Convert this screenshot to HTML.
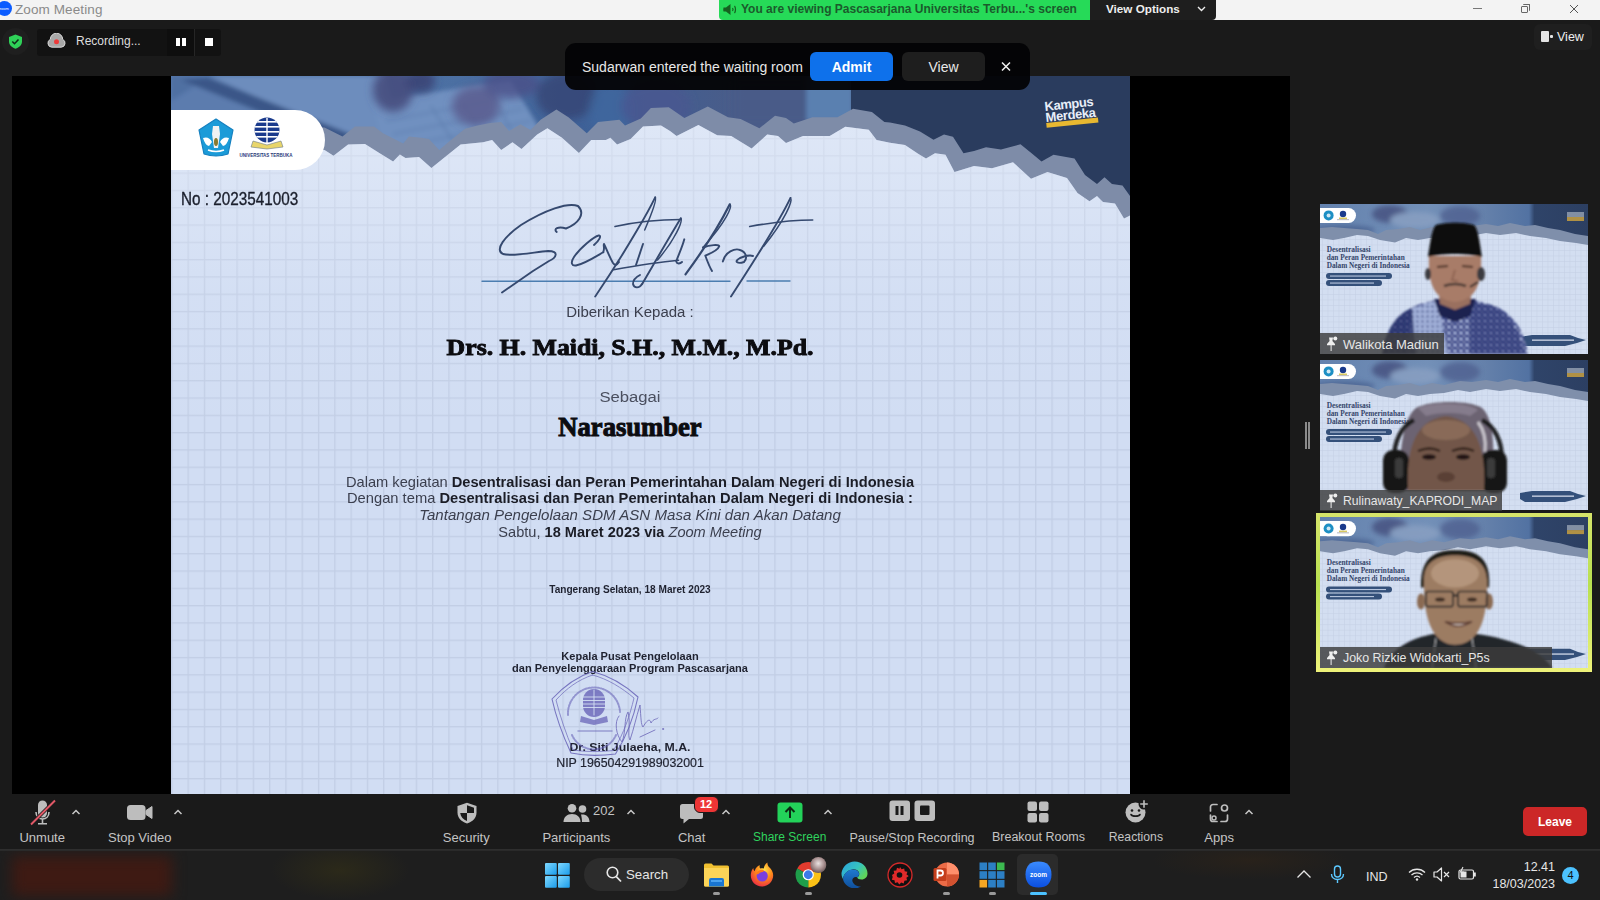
<!DOCTYPE html>
<html><head><meta charset="utf-8">
<style>
*{margin:0;padding:0;box-sizing:border-box}
html,body{width:1600px;height:900px;overflow:hidden;background:#1a1a1a;font-family:"Liberation Sans",sans-serif}
.a{position:absolute}
#title{left:0;top:0;width:1600px;height:20px;background:#f3f3f3}
#dark{left:0;top:20px;width:1600px;height:830px;background:#1a1a1a}
#video{left:12px;top:76px;width:1278px;height:718px;background:#000}
#cert{left:171px;top:76px;width:959px;height:718px;background:#d3dff1;overflow:hidden}
#toolbar{left:0;top:794px;width:1600px;height:56px;background:#1a1a1a}
#taskbar{left:0;top:850px;width:1600px;height:50px;background:#202020}
.lbl{color:#d0d0d0;font-size:13px;white-space:nowrap}
</style></head><body>
<div class="a" id="title"></div>
<div class="a" id="dark"></div>
<div class="a" id="video"></div>
<div class="a" id="toolbar"></div>

<!-- TITLE BAR -->
<div class="a" style="left:-3px;top:1px;width:15px;height:15px;border-radius:50%;background:#0b5cff"></div>
<div class="a" style="left:-1px;top:6px;font-size:4px;color:#fff">zoom</div>
<div class="a" style="left:15px;top:2px;font-size:13.5px;color:#8a8a8a;letter-spacing:0.1px">Zoom Meeting</div>
<div class="a" style="left:719px;top:0;width:371px;height:20px;background:#26da58;border-bottom-left-radius:4px"></div>
<svg class="a" style="left:722px;top:3px" width="16" height="13" viewBox="0 0 16 13"><path d="M1.5 4.5Q1 6.5 1.5 8.5h2.5l4.5 3.5v-11L4 4.5z" fill="#15601f"/><path d="M10.5 5c.6 .8 .6 2.2 0 3M12.5 3c1.3 1.6 1.3 5.4 0 7" stroke="#15601f" stroke-width="1.2" fill="none"/></svg>
<div class="a" style="left:741px;top:2px;font-size:12px;font-weight:bold;color:#1b5a2c;white-space:nowrap">You are viewing Pascasarjana Universitas Terbu...'s screen</div>
<div class="a" style="left:1090px;top:0;width:126px;height:20px;background:#1e1e1e;border-bottom-right-radius:4px"></div>
<div class="a" style="left:1106px;top:2px;font-size:11.7px;font-weight:bold;color:#eee;white-space:nowrap">View Options</div>
<svg class="a" style="left:1197px;top:6px" width="9" height="6" viewBox="0 0 9 6"><path d="M1 1l3.5 3.5L8 1" stroke="#eee" stroke-width="1.4" fill="none"/></svg>
<div class="a" style="left:1473px;top:8px;width:9px;height:1px;background:#777"></div>
<div class="a" style="left:1521px;top:6px;width:7px;height:7px;border:1px solid #666;border-radius:1px"></div>
<div class="a" style="left:1523px;top:4px;width:7px;height:7px;border-top:1px solid #666;border-right:1px solid #666;border-radius:1px"></div>
<svg class="a" style="left:1569px;top:4px" width="10" height="10" viewBox="0 0 10 10"><path d="M1 1l8 8M9 1L1 9" stroke="#555" stroke-width="1"/></svg>

<!-- TOP DARK BAR -->
<div class="a" style="left:2px;top:28px;width:27px;height:27px;border-radius:50%;background:#1f1f1f"></div>
<svg class="a" style="left:8px;top:34px" width="15" height="15" viewBox="0 0 15 15"><path d="M7.5 0.5L14 3v4.5c0 3.5-2.8 6-6.5 7.3C3.8 13.5 1 11 1 7.5V3z" fill="#2fd158"/><path d="M4.3 7.5l2.2 2.2 4-4.2" stroke="#0f2a18" stroke-width="1.6" fill="none"/></svg>
<div class="a" style="left:37px;top:29px;width:184px;height:27px;background:#121212;border-radius:3px"></div>
<div class="a" style="left:167px;top:29px;width:27px;height:27px;background:#0e0e0e"></div>
<div class="a" style="left:194px;top:29px;width:1px;height:27px;background:#262626"></div>
<svg class="a" style="left:47px;top:33px" width="19" height="15" viewBox="0 0 19 15"><path d="M4.8 14.2A4.1 4.1 0 0 1 3.3 6.4 6.2 6.2 0 0 1 15.7 6.4 4.1 4.1 0 0 1 14.2 14.2z" fill="#a8a8a8" stroke="#d8d8d8" stroke-width="1"/><circle cx="9.5" cy="8.8" r="2.5" fill="#ee3b3b"/></svg>
<div class="a" style="left:76px;top:34px;font-size:12px;color:#ddd;white-space:nowrap">Recording...</div>
<div class="a" style="left:176px;top:38px;width:3.5px;height:8px;background:#fff"></div>
<div class="a" style="left:182px;top:38px;width:3.5px;height:8px;background:#fff"></div>
<div class="a" style="left:205px;top:38px;width:8px;height:8px;background:#fff"></div>

<div class="a" style="left:1534px;top:24px;width:58px;height:26px;border-radius:6px;background:#1f1f1f"></div>
<div class="a" style="left:1541px;top:31px;width:8px;height:11px;background:#e6e6e6;border-radius:1px"></div>
<div class="a" style="left:1550px;top:35px;width:3px;height:3px;background:#e6e6e6;border-radius:1px"></div>
<div class="a" style="left:1557px;top:30px;font-size:12.5px;color:#eee">View</div>


<div class="a" id="cert">
<svg class="a" style="left:0;top:0" width="959" height="718" viewBox="0 0 959 718">
<defs>
<linearGradient id="ph" x1="0" y1="0" x2="1" y2="0">
<stop offset="0" stop-color="#5579ad"/><stop offset="0.3" stop-color="#4b6fa2"/><stop offset="0.45" stop-color="#3d5f96"/><stop offset="0.6" stop-color="#4a5c88"/><stop offset="0.7" stop-color="#4a5c88"/><stop offset="0.71" stop-color="#2a3c5e"/><stop offset="1" stop-color="#2a3c5e"/>
</linearGradient>
<pattern id="grid" x="16.5" y="10" width="16.3" height="17.3" patternUnits="userSpaceOnUse">
<rect width="16.3" height="17.3" fill="#d1ddf3"/>
<rect x="0" y="-0.3" width="16.3" height="1.6" fill="#c2cee5"/>
<rect x="-0.3" y="0" width="1.6" height="17.3" fill="#c2cee5"/>
</pattern>
<linearGradient id="glow" x1="0" y1="0" x2="0" y2="718" gradientUnits="userSpaceOnUse"><stop offset="0.07" stop-color="#eef3fb" stop-opacity="0.45"/><stop offset="0.3" stop-color="#eef3fb" stop-opacity="0.1"/><stop offset="0.5" stop-color="#eef3fb" stop-opacity="0"/></linearGradient>
<filter id="bl4"><feGaussianBlur stdDeviation="4"/></filter>
<filter id="bl2"><feGaussianBlur stdDeviation="2"/></filter>
</defs>
<rect width="959" height="220" fill="url(#ph)"/>
<g filter="url(#bl2)">
<path d="M0 0 H40 L0 25z" fill="#4f70a2"/>
<path d="M40 0 H215 L230 60 L200 75 L165 70z" fill="#6d8dbd"/>
<path d="M0 25 L40 0 L175 62 L160 72 L0 60z" fill="#5b7cae"/>
<path d="M10 4 L38 2 L180 58 L168 68z" fill="#3a5688"/>
<path d="M200 25 L340 5 L370 55 L260 85 L215 80z" fill="#7090c0"/>
<g stroke="#5070a0" stroke-width="1.2" opacity="0.7"><path d="M215 45 L345 20M222 58 L352 33M232 70 L360 45M260 30 L290 78M290 25 L320 72M320 18 L345 62"/></g>
</g>
<g filter="url(#bl4)">
<ellipse cx="222" cy="14" rx="20" ry="22" fill="#474c7e" opacity="0.9"/>
<ellipse cx="250" cy="5" rx="14" ry="12" fill="#3a3f70" opacity="0.8"/>
<ellipse cx="305" cy="30" rx="24" ry="20" fill="#5a5c8e" opacity="0.85"/>
<ellipse cx="340" cy="8" rx="28" ry="14" fill="#4a5088" opacity="0.8"/>
<ellipse cx="395" cy="20" rx="30" ry="24" fill="#35406e" opacity="0.7"/>
<ellipse cx="440" cy="35" rx="22" ry="28" fill="#3f69a0" opacity="0.7"/>
<ellipse cx="485" cy="30" rx="35" ry="25" fill="#4a5590" opacity="0.75"/>
<rect x="560" y="0" width="120" height="50" fill="#4a5c88" opacity="0.6"/>
</g>
<rect x="635" y="0" width="47" height="45" fill="#5a80b0" filter="url(#bl2)"/>
<path d="M680 0 H959 V150 L680 60z" fill="#2a3c5e"/>
<polygon points="0.0,42.0 153.5,51.6 171.5,60.6 183.9,50.5 203.0,50.5 212.0,57.2 232.2,67.4 237.9,60.6 250.2,61.8 258.0,62.9 268.2,74.1 277.2,66.2 294.0,52.8 306.5,49.4 319.0,47.1 330.2,46.0 338.1,55.0 349.4,48.2 359.5,53.9 369.6,43.8 385.4,33.6 397.8,41.5 415.8,57.2 427.0,46.0 448.4,43.8 454.0,49.4 469.8,42.6 479.9,31.9 497.8,31.2 513.4,42.0 536.8,30.4 557.0,41.3 569.6,43.0 588.4,52.3 604.0,39.8 615.0,42.0 622.8,47.6 641.5,41.3 666.5,41.3 682.0,32.8 700.9,35.9 713.4,46.0 719.0,46.5 734.0,49.5 749.0,55.5 762.5,63.8 773.0,58.5 782.0,60.8 792.5,77.2 803.0,75.0 815.0,71.2 830.0,73.5 849.5,68.2 861.5,78.0 870.5,85.5 882.5,78.8 903.5,82.5 914.0,99.0 926.0,108.0 933.5,101.2 941.0,108.0 951.5,109.5 959.0,120.0 959,718 0,718" fill="#7e8ca8"/>
<polygon points="0.0,64.0 153.5,74.1 162.5,79.8 177.1,68.5 194.0,67.9 207.5,76.4 222.1,85.4 228.9,78.6 234.5,82.0 248.0,80.9 260.4,92.1 272.8,82.0 289.6,68.5 312.1,66.2 321.1,64.0 330.2,74.1 341.5,66.2 350.5,73.0 366.2,58.4 376.4,52.2 391.0,61.8 407.9,76.9 420.2,64.0 434.9,64.0 439.4,61.8 446.1,68.5 459.6,62.9 472.0,50.5 490.0,49.4 499.0,55.0 505.6,60.0 527.4,49.0 546.2,59.3 560.2,60.0 580.6,72.6 596.2,58.5 607.0,60.0 615.0,67.0 632.0,60.0 658.7,60.0 674.3,50.7 697.8,53.8 705.6,64.0 719.0,66.8 734.0,69.0 747.5,78.0 755.0,82.5 764.0,77.2 774.5,78.8 783.5,96.0 803.0,90.0 821.0,92.2 842.0,86.2 860.0,102.8 876.5,96.0 896.0,102.0 906.5,117.0 918.5,125.2 926.0,120.0 932.0,126.0 944.0,127.5 953.0,142.5 959.0,139.5 959,718 0,718" fill="url(#grid)"/>
<polygon points="0.0,64.0 153.5,74.1 162.5,79.8 177.1,68.5 194.0,67.9 207.5,76.4 222.1,85.4 228.9,78.6 234.5,82.0 248.0,80.9 260.4,92.1 272.8,82.0 289.6,68.5 312.1,66.2 321.1,64.0 330.2,74.1 341.5,66.2 350.5,73.0 366.2,58.4 376.4,52.2 391.0,61.8 407.9,76.9 420.2,64.0 434.9,64.0 439.4,61.8 446.1,68.5 459.6,62.9 472.0,50.5 490.0,49.4 499.0,55.0 505.6,60.0 527.4,49.0 546.2,59.3 560.2,60.0 580.6,72.6 596.2,58.5 607.0,60.0 615.0,67.0 632.0,60.0 658.7,60.0 674.3,50.7 697.8,53.8 705.6,64.0 719.0,66.8 734.0,69.0 747.5,78.0 755.0,82.5 764.0,77.2 774.5,78.8 783.5,96.0 803.0,90.0 821.0,92.2 842.0,86.2 860.0,102.8 876.5,96.0 896.0,102.0 906.5,117.0 918.5,125.2 926.0,120.0 932.0,126.0 944.0,127.5 953.0,142.5 959.0,139.5 959,718 0,718" fill="url(#glow)"/>
</svg>
<div class="a" style="left:0;top:34px;width:154px;height:60px;background:#fff;border-radius:0 30px 30px 0"></div>
<svg class="a" style="left:26px;top:42px" width="38" height="40" viewBox="0 0 38 40">
<path d="M19 1 L36 12 L31 36 Q19 40 7 36 L2 12z" fill="#1b9bd8" stroke="#1580c0" stroke-width="1.2" stroke-linejoin="round"/>
<path d="M6 20 Q12 18 15 24 L12 28 Q8 27 6 20z M32 20 Q26 18 23 24 L26 28 Q30 27 32 20z" fill="#fff"/>
<path d="M16 8 L22 8 L23 16 L21 30 L17 30 L15 16z" fill="#f2f2f2"/>
<ellipse cx="19" cy="24" rx="2" ry="4" fill="#8a7a30"/>
<path d="M11 32 Q19 35 27 32" stroke="#fff" stroke-width="1.5" fill="none"/>
</svg>
<svg class="a" style="left:66px;top:40px" width="60" height="44" viewBox="0 0 60 44">
<defs><clipPath id="utc"><circle cx="30" cy="14" r="12.5"/></clipPath></defs>
<g clip-path="url(#utc)"><rect x="16" y="0" width="28" height="28" fill="#1a3a8c"/>
<rect x="16" y="5" width="28" height="1.6" fill="#fff"/><rect x="16" y="10" width="28" height="1.6" fill="#fff"/><rect x="16" y="15" width="28" height="1.6" fill="#fff"/><rect x="16" y="20" width="28" height="1.6" fill="#fff"/></g>
<rect x="29.3" y="2" width="1.4" height="27" fill="#fff"/>
<path d="M16 25 L30 29 L44 25 L46 31 L30 33 L14 31z" fill="#e8d56a" stroke="#6a7a8a" stroke-width="0.6"/>
<text x="2.5" y="41" font-size="4.8" font-family="Liberation Sans" font-weight="bold" fill="#2a3a7a" textLength="53" lengthAdjust="spacingAndGlyphs">UNIVERSITAS TERBUKA</text>
</svg>
<div class="a" style="left:873px;top:26px;transform:rotate(-6deg);transform-origin:0 0">
<div style="font-size:13px;line-height:10.5px;font-weight:bold;color:#e8eef8;letter-spacing:-0.4px">Kampus<br>Merdeka</div>
<div style="margin-top:0px;width:52px;height:5px;background:#e8b830"></div>
</div>
<div class="a" style="left:-41px;top:114.9px;width:1000px;text-align:center;font-size:17.6px;line-height:17.6px;color:#1b1f2c;font-weight:normal;white-space:nowrap;transform:scaleX(0.868);left:10px;width:auto;text-align:left;transform-origin:0 0;-webkit-text-stroke:0.35px #1b1f2c;">No : 2023541003</div>
<div class="a" style="left:-41px;top:229px;width:1000px;text-align:center;font-size:14px;line-height:14px;color:#3b3f4e;font-weight:normal;white-space:nowrap;transform:scaleX(1.07);">Diberikan Kepada :</div>
<div class="a" style="left:-41px;top:258.9px;width:1000px;text-align:center;font-size:24px;line-height:24px;font-family:'Liberation Serif',serif;color:#0c0c10;font-weight:bold;white-space:nowrap;transform:scaleX(1.075);-webkit-text-stroke:0.9px #0c0c10;">Drs. H. Maidi, S.H., M.M., M.Pd.</div>
<div class="a" style="left:-41px;top:313.5px;width:1000px;text-align:center;font-size:14px;line-height:14px;color:#4a4f5f;font-weight:normal;white-space:nowrap;transform:scaleX(1.19);">Sebagai</div>
<div class="a" style="left:-41px;top:338px;width:1000px;text-align:center;font-size:26.6px;line-height:26.6px;font-family:'Liberation Serif',serif;color:#0c0c10;font-weight:bold;white-space:nowrap;transform:scaleX(1.0);-webkit-text-stroke:1px #0c0c10;">Narasumber</div>
<div class="a" style="left:-41px;top:398.5px;width:1000px;text-align:center;font-size:14.5px;line-height:14.5px;color:#3b3f4e;font-weight:normal;white-space:nowrap;transform:scaleX(1.01);">Dalam kegiatan <b style="color:#1b1d26">Desentralisasi dan Peran Pemerintahan Dalam Negeri di Indonesia</b></div>
<div class="a" style="left:-41px;top:415.3px;width:1000px;text-align:center;font-size:14.5px;line-height:14.5px;color:#3b3f4e;font-weight:normal;white-space:nowrap;transform:scaleX(1.015);">Dengan tema <b style="color:#1b1d26">Desentralisasi dan Peran Pemerintahan Dalam Negeri di Indonesia :</b></div>
<div class="a" style="left:-41px;top:432.2px;width:1000px;text-align:center;font-size:14.5px;line-height:14.5px;color:#3b3f4e;font-weight:normal;white-space:nowrap;transform:scaleX(1.04);"><i>Tantangan Pengelolaan SDM ASN Masa Kini dan Akan Datang</i></div>
<div class="a" style="left:-41px;top:449.1px;width:1000px;text-align:center;font-size:14.5px;line-height:14.5px;color:#3b3f4e;font-weight:normal;white-space:nowrap;transform:scaleX(1.005);">Sabtu, <b style="color:#1b1d26">18 Maret 2023 via</b> <i>Zoom Meeting</i></div>
<div class="a" style="left:-41px;top:508.3px;width:1000px;text-align:center;font-size:10.5px;line-height:10.5px;color:#1f2230;font-weight:bold;white-space:nowrap;transform:scaleX(0.962);">Tangerang Selatan, 18 Maret 2023</div>
<div class="a" style="left:-41px;top:574.6px;width:1000px;text-align:center;font-size:10.5px;line-height:10.5px;color:#1f2230;font-weight:bold;white-space:nowrap;transform:scaleX(1.05);">Kepala Pusat Pengelolaan</div>
<div class="a" style="left:-41px;top:587.1px;width:1000px;text-align:center;font-size:10.5px;line-height:10.5px;color:#1f2230;font-weight:bold;white-space:nowrap;transform:scaleX(1.05);">dan Penyelenggaraan Program Pascasarjana</div>
<div class="a" style="left:-41px;top:666.2px;width:1000px;text-align:center;font-size:11.5px;line-height:11.5px;color:#1f2230;font-weight:bold;white-space:nowrap;transform:scaleX(1.07);">Dr. Siti Julaeha, M.A.</div>
<div class="a" style="left:-41px;top:680.7px;width:1000px;text-align:center;font-size:12px;line-height:12px;color:#1f2230;font-weight:normal;white-space:nowrap;transform:scaleX(1.03);-webkit-text-stroke:0.2px #1f2230;">NIP 196504291989032001</div>
<svg class="a" style="left:0;top:0;pointer-events:none" width="959" height="718" viewBox="0 0 959 718">
<g transform="translate(-171,-76)" fill="none" stroke-linecap="round" stroke-linejoin="round">
<g stroke="#4b7db0" stroke-width="1.4"><path d="M482,281.3 H730"/><path d="M747,281 H790"/></g>
<g stroke="#35496f" stroke-width="1.9">
<path d="M556.7,232 C553,229 558,226 566,228.5 C578,224 586,214 578,206 C568,202 545,210 521,225 C505,236 494,250 503,254 C512,257 535,252 548,251 C560,251 556,258 549,261 L533,271 L502,292.5"/>
<path d="M594,245 C599,241 602,235 598.7,235.5 C594,236.5 580,248 574,257 C570,263 572,266 576,265.5 C584,264 595,257 603.3,252.2"/>
<path d="M603.3,252.2 C605,248 603,245 604,244 C607,250 610,258 613,263 C615,266 617,265 619,262"/>
<path d="M655.2,197.3 C650,208 630,245 595.2,296.5"/>
<path d="M655.2,197.3 C657,199 652,213 644.7,230" stroke-width="1.5"/>
<path d="M615,226.5 C640,221 660,219.5 681,219.5" stroke-width="1.6"/>
<path d="M643,244 L636,265"/>
<path d="M680.8,218.3 C670,236 655,262 642.3,283.7"/>
<path d="M680.8,218.3 C683,221 675,240 657.5,260" stroke-width="1.5"/>
<path d="M642.3,283.7 C639,289 634,288 633,284 C633,280 636,277 640,275"/>
<path d="M613.5,269.7 C640,265 660,262 678.5,260.3" stroke-width="1.5"/>
<path d="M684.3,239.3 C682,248 678,256 676.2,261.5 C677,264 680,264 682,262"/>
<path d="M729.8,204.3 C722,220 705,248 685.5,274.3" stroke-width="2.2"/>
<path d="M729.8,204.3 C733,206 726,222 703,247.5" stroke-width="1.5"/>
<path d="M703,247.5 C710,245 719,244 719.3,246.3 C718,250 712,253 705.3,255.7 C707,260 709,266 712,271"/>
<path d="M722.8,261.5 C725,252 735,248 740,250 C746,252 748,258 744,262 C738,264 733,262 740,258 C745,256 750,255 753,256"/>
<path d="M790.5,197.9 C780,220 760,252 731,296.5"/>
<path d="M790.5,197.9 C793,201 785,220 763.7,246.3" stroke-width="1.5"/>
<path d="M749.7,226.5 C775,222 795,220 812.7,220" stroke-width="1.6"/>
</g>
<g stroke="#625cb4" stroke-width="1.1" opacity="0.8">
<path d="M592.5,671.5 C610,676 626,686 638,697 C634,716 627,736 615.5,754 C600,756 585,756 571,753 C563,736 556,717 552,699 C564,686 576,677 592.5,671.5z"/>
<path d="M592.5,675 C608,679 622,688 634,698 C630,715 624,733 613.5,750.5 C600,752 585,752 573,750 C566,734 560,716 556,700 C567,688 578,680 592.5,675z" stroke-width="0.8"/>
</g>
<g fill="none" stroke="#625cb4" stroke-width="2" opacity="0.55" stroke-dasharray="1.6 1.4">
<path d="M568,715 A26,26 0 0 1 620,712"/>
<path d="M572,735 A24,24 0 0 0 616,735"/>
</g>
<g fill="#625cb4" opacity="0.75">
<path d="M583,700 a11,11 0 0 1 22,0 v6 a11,11 0 0 1 -22,0z"/>
</g>
<g stroke="#d3dff3" stroke-width="0.9"><path d="M582,697h24M582,700.5h24M582,704h24M582,707.5h24M594,690v25"/></g>
<path d="M581,716 L594,720 L607,716 L608,722 L594,725 L580,722z" fill="#625cb4" opacity="0.7"/>
<path d="M578,731 H612" stroke="#625cb4" stroke-width="1.5" opacity="0.5"/>
<g stroke="#6c66b8" stroke-width="0.9" opacity="0.9">
<path d="M619,716 C614,722 616,735 622,742 C626,732 624,718 628,712 C631,722 627,736 630,740 C634,728 636,718 640,705 C641,718 641,725 643,727 C647,720 650,718 651,723 C654,718 656,720 658,718"/>
<path d="M640,737 L655,730"/><circle cx="663" cy="729" r="0.6"/>
</g>
</g></svg>

</div>

<svg width="0" height="0" style="position:absolute">
<defs>
<pattern id="tgrid" x="2" y="2" width="5.5" height="5.5" patternUnits="userSpaceOnUse"><rect width="5.5" height="5.5" fill="#d3def1"/><rect width="5.5" height="0.5" fill="#c4d0e5"/><rect width="0.5" height="5.5" fill="#c4d0e5"/></pattern>
<linearGradient id="tph" x1="0" y1="0" x2="1" y2="0"><stop offset="0" stop-color="#6482ae"/><stop offset="0.4" stop-color="#7390b8"/><stop offset="0.62" stop-color="#6480aa"/><stop offset="0.78" stop-color="#5272a2"/><stop offset="0.8" stop-color="#2f4469"/><stop offset="1" stop-color="#2c3f62"/></linearGradient>
<filter id="tb1"><feGaussianBlur stdDeviation="1.2"/></filter>
<filter id="tb2"><feGaussianBlur stdDeviation="2.5"/></filter>
<symbol id="slide" viewBox="0 0 268 150">
<rect width="268" height="45" fill="url(#tph)"/>
<g filter="url(#tb2)" opacity="0.8"><ellipse cx="70" cy="10" rx="18" ry="9" fill="#45507e"/><ellipse cx="95" cy="16" rx="25" ry="8" fill="#8aa0c2"/><ellipse cx="25" cy="26" rx="30" ry="5" fill="#4a6290"/><ellipse cx="140" cy="12" rx="20" ry="10" fill="#506090"/></g>
<polygon points="0,24 12,23 24,24 37,25 48,26 58,30 66,26 78,25 90,23 100,26 112,23 124,25 140,21 152,22 166,20 178,22 190,19 205,22 215,21 228,24 240,26 255,30 268,32 268,150 0,150" fill="#7f8fab"/>
<polygon points="0,34 13,36 24,34 37,31 48,32 60,36 75,38.5 86,34 98,36 110,34 124,33 138,30 150,32 166,29 180,31 196,29 210,32 226,34 240,37 256,39 268,41 268,150 0,150" fill="url(#tgrid)"/>
<rect x="0" y="4" width="36" height="15" rx="7.5" fill="#fff"/><rect x="0" y="4" width="10" height="15" fill="#fff"/>
<circle cx="8.6" cy="11.4" r="5" fill="#1d8fc4"/><circle cx="8.6" cy="11.4" r="2" fill="#cfe8f4"/><circle cx="23" cy="10" r="3.2" fill="#1a3a8c"/><rect x="19" y="13.5" width="8" height="1.6" fill="#d8c860"/><rect x="17" y="15.5" width="12" height="0.6" fill="#889"/>
<rect x="247" y="8" width="17" height="5" fill="#c9cfd9" opacity="0.55"/><rect x="247" y="13" width="17" height="4" fill="#c8a040" opacity="0.85"/>
<text x="6.7" y="47.8" font-family="Liberation Serif" font-weight="bold" font-size="8" fill="#34456a" textLength="44" lengthAdjust="spacingAndGlyphs">Desentralisasi</text>
<text x="6.7" y="55.8" font-family="Liberation Serif" font-weight="bold" font-size="8" fill="#34456a" textLength="78" lengthAdjust="spacingAndGlyphs">dan Peran Pemerintahan</text>
<text x="6.7" y="64" font-family="Liberation Serif" font-weight="bold" font-size="8" fill="#34456a" textLength="83" lengthAdjust="spacingAndGlyphs">Dalam Negeri di Indonesia</text>
<rect x="6" y="69" width="66" height="6" rx="3" fill="#34507a"/><rect x="10" y="71.5" width="56" height="1.1" fill="#b8c6de"/>
<rect x="6" y="76" width="56" height="6" rx="3" fill="#34507a"/><rect x="10" y="78.5" width="44" height="1.1" fill="#b8c6de"/>
<path d="M200 133 L212 131 L250 131 L258 134 L266 136 L257 139 L245 142 L205 142 L200 139z" fill="#34507a"/>
<rect x="212" y="135.5" width="42" height="1.3" fill="#d0d8e8"/>
</symbol>
</defs></svg>
<svg class="a" style="left:1320px;top:204px" width="268" height="150" viewBox="0 0 268 150"><use href="#slide"/>
<g>
<defs><pattern id="batik" width="6" height="6" patternUnits="userSpaceOnUse"><rect width="6" height="6" fill="#3e4a8a"/><circle cx="3" cy="3" r="1.6" fill="#b8c4e8"/><circle cx="0" cy="0" r="1" fill="#d8e0f4"/><circle cx="6" cy="6" r="1" fill="#d8e0f4"/></pattern>
<pattern id="batik2" width="5" height="5" patternUnits="userSpaceOnUse"><rect width="5" height="5" fill="#a9b8de"/><circle cx="2.5" cy="2.5" r="1.1" fill="#2e3a78"/></pattern></defs>
<g filter="url(#tb1)">
<path d="M62 150 C66 125 78 108 100 100 L120 95 L150 95 L172 101 C192 108 204 125 208 150z" fill="url(#batik)"/>
<path d="M92 104 L118 96 L128 150 L88 150z" fill="url(#batik2)" opacity="0.9"/>
<path d="M62 150 C66 125 76 110 92 104 L96 150z" fill="#1f2a62" opacity="0.7"/>
<path d="M150 97 L176 103 C190 112 200 128 204 150 L150 150z" fill="#2a3472" opacity="0.55"/>
<path d="M114 95 L156 95 L150 112 L135 118 L120 112z" fill="#1a2050"/>
<path d="M118 82 L152 82 L150 100 L135 106 L120 100z" fill="#9a705e"/>
<path d="M109 52 C108 76 112 96 135 98 C158 96 162 76 161 52z" fill="#a87c68"/>
<ellipse cx="108" cy="70" rx="3" ry="6" fill="#3a3a40"/><ellipse cx="161" cy="70" rx="4" ry="7" fill="#3a3a40"/>
<path d="M158 78 L150 83" stroke="#222" stroke-width="2"/>
<path d="M116 21 C125 18 145 18 154 21 C158 24 160 40 162 53 C148 49 122 49 108 53 C110 40 112 24 116 21z" fill="#0c0c0e"/>
<path d="M124 82 Q135 78 146 82" stroke="#4a3a35" stroke-width="2.5" fill="none"/>
<path d="M117 63 L128 62 M142 62 L153 63" stroke="#4a3028" stroke-width="1.8"/><path d="M135 66 L132 76 L138 77" stroke="#8a6050" stroke-width="1.6" fill="none"/>
</g></g>
</svg>
<div class="a" style="left:1320px;top:333px;width:124px;height:21px;background:rgba(60,60,60,0.82)"></div>
<svg class="a" style="left:1326px;top:336px" width="12" height="16" viewBox="0 0 12 16"><path d="M3 1.5h4l-.6 3.5 2.6 3v1.2H1V8l2.6-3z" fill="#eee"/><rect x="4.6" y="9" width="1" height="6" fill="#eee"/><circle cx="9.3" cy="2.5" r="2" fill="#eee"/></svg>
<div class="a" style="left:1343px;top:337px;font-size:13px;line-height:15px;color:#e6e6e6;white-space:nowrap">Walikota Madiun</div>
<svg class="a" style="left:1320px;top:360px" width="268" height="150" viewBox="0 0 268 150"><use href="#slide"/>
<g filter="url(#tb1)">
<path d="M81 131 C78 100 82 58 96 48 C110 40 150 40 162 48 C176 60 174 100 172 131z" fill="#6c6372"/>
<path d="M98 48 C112 42 148 42 158 50 L150 56 C140 52 118 52 106 56z" fill="#857c8c"/><path d="M158 62 C164 70 166 82 165 92" stroke="#c8c4cc" stroke-width="3" fill="none"/>
<path d="M74 100 C74 80 82 66 94 60 M182 100 C182 80 174 66 162 60" stroke="#121212" stroke-width="4.5" fill="none" opacity="0.9"/>
<rect x="63" y="90" width="26" height="43" rx="10" fill="#141414"/><rect x="161" y="90" width="26" height="43" rx="10" fill="#141414"/>
<rect x="75" y="98" width="8" height="20" rx="3" fill="#3a3a3a"/><rect x="167" y="98" width="8" height="20" rx="3" fill="#3a3a3a"/>
<path d="M88 131 C86 95 92 60 126 56 C160 60 166 95 164 131z" fill="#72574a"/>
<ellipse cx="126" cy="70" rx="24" ry="10" fill="#8e705c" opacity="0.8"/>
<path d="M98 91 Q110 86 120 91 M132 91 Q144 86 154 91" stroke="#2e1e18" stroke-width="2.4" fill="none"/><ellipse cx="109" cy="97" rx="7" ry="2.8" fill="#221612"/><ellipse cx="143" cy="97" rx="7" ry="2.8" fill="#221612"/>
<ellipse cx="126" cy="117" rx="9" ry="5" fill="#5a4034"/>
</g>
</svg>
<div class="a" style="left:1320px;top:490px;width:182px;height:21px;background:rgba(60,60,60,0.82)"></div>
<svg class="a" style="left:1326px;top:493px" width="12" height="16" viewBox="0 0 12 16"><path d="M3 1.5h4l-.6 3.5 2.6 3v1.2H1V8l2.6-3z" fill="#eee"/><rect x="4.6" y="9" width="1" height="6" fill="#eee"/><circle cx="9.3" cy="2.5" r="2" fill="#eee"/></svg>
<div class="a" style="left:1343px;top:494px;font-size:12.2px;line-height:15px;color:#e6e6e6;white-space:nowrap">Rulinawaty_KAPRODI_MAP</div>
<div class="a" style="left:1316px;top:513px;width:276px;height:159px;background:linear-gradient(180deg,#d6e46a 0%,#b8e050 45%,#eef27a 100%)"></div>
<svg class="a" style="left:1320px;top:517px" width="268" height="151" viewBox="0 0 268 150" preserveAspectRatio="none"><use href="#slide"/>
<g filter="url(#tb1)">
<path d="M64 150 C70 132 90 120 115 116 L155 116 C185 120 220 130 232 150z" fill="#23252c"/>
<path d="M120 114 L135 128 L150 114z" fill="#3a3c44"/>
<rect x="118" y="104" width="32" height="16" fill="#8a6a52"/>
<path d="M101 70 C100 40 115 33 135 33 C157 33 171 40 169 70z" fill="#1e1a18"/>
<path d="M104 62 C103 100 112 126 135 127 C160 126 168 100 167 62 C166 44 152 38 135 38 C118 38 104 44 104 62z" fill="#9c7b62"/>
<ellipse cx="135" cy="56" rx="24" ry="14" fill="#b89a80" opacity="0.85"/>
<ellipse cx="101" cy="84" rx="4" ry="8" fill="#8a6a52"/><ellipse cx="169" cy="84" rx="4" ry="8" fill="#8a6a52"/>
<rect x="106" y="74" width="27" height="15" rx="2" fill="none" stroke="#2a2a2a" stroke-width="1.6"/>
<rect x="138" y="74" width="29" height="15" rx="2" fill="none" stroke="#2a2a2a" stroke-width="1.6"/><ellipse cx="120" cy="82" rx="5" ry="2" fill="#3a2a22"/><ellipse cx="152" cy="82" rx="5" ry="2" fill="#3a2a22"/>
<path d="M133 78 L138 78" stroke="#262626" stroke-width="2"/>
<path d="M125 104 Q138 113 152 104 Q138 107 125 104z" fill="#d8c8c0" stroke="#5a3a30" stroke-width="1.5"/>
<path d="M112 150 L116 120 M156 150 L152 120" stroke="#ddd" stroke-width="0.8"/>
</g>
</svg>
<div class="a" style="left:1320px;top:647px;width:232px;height:21px;background:rgba(60,60,60,0.82)"></div>
<svg class="a" style="left:1326px;top:650px" width="12" height="16" viewBox="0 0 12 16"><path d="M3 1.5h4l-.6 3.5 2.6 3v1.2H1V8l2.6-3z" fill="#eee"/><rect x="4.6" y="9" width="1" height="6" fill="#eee"/><circle cx="9.3" cy="2.5" r="2" fill="#eee"/></svg>
<div class="a" style="left:1343px;top:651px;font-size:12.4px;line-height:15px;color:#e6e6e6;white-space:nowrap">Joko Rizkie Widokarti_P5s</div>
<div class="a" style="left:1305px;top:422px;width:2px;height:27px;background:#8a8a8a"></div><div class="a" style="left:1308px;top:422px;width:2px;height:27px;background:#8a8a8a"></div>

<div class="a" style="left:0;top:849px;width:1600px;height:1px;background:#2e2e2e"></div>
<svg class="a" style="left:28px;top:799px" width="30" height="28" viewBox="0 0 30 28">
<rect x="10" y="1.5" width="9" height="17" rx="4.5" fill="#bdbdbd"/>
<path d="M8 13c0 4.5 3 7 6.5 7s6.5-2.5 6.5-7" stroke="#bdbdbd" stroke-width="1.6" fill="none"/>
<path d="M14.5 20v4.5M10 24.8h9" stroke="#bdbdbd" stroke-width="1.6"/>
<path d="M3 25.5L27 1.5" stroke="#1a1a1a" stroke-width="3.5"/>
<path d="M3 25.5L27 1.5" stroke="#e05866" stroke-width="1.9"/>
</svg>
<svg class="a" style="left:71px;top:808px" width="10" height="8" viewBox="0 0 10 8"><path d="M1.5 6L5 2.5 8.5 6" stroke="#c8c8c8" stroke-width="1.5" fill="none"/></svg>
<div class="a" style="left:-57.8px;top:830.5px;width:200px;text-align:center;font-size:13px;line-height:13px;color:#c4c4c4;white-space:nowrap">Unmute</div>
<svg class="a" style="left:126px;top:804px" width="28" height="17" viewBox="0 0 28 17">
<rect x="1" y="1" width="18.5" height="15" rx="3.5" fill="#bdbdbd"/>
<path d="M20 6.5L26 2.5v12L20 10.5z" fill="#bdbdbd" stroke="#bdbdbd" stroke-width="1" stroke-linejoin="round"/>
</svg>
<svg class="a" style="left:173px;top:808px" width="10" height="8" viewBox="0 0 10 8"><path d="M1.5 6L5 2.5 8.5 6" stroke="#c8c8c8" stroke-width="1.5" fill="none"/></svg>
<div class="a" style="left:39.69999999999999px;top:830.5px;width:200px;text-align:center;font-size:13px;line-height:13px;color:#c4c4c4;white-space:nowrap">Stop Video</div>
<svg class="a" style="left:456px;top:802px" width="22" height="22" viewBox="0 0 22 22">
<path d="M11 0.8L20.5 4v6.5c0 5.5-4 9.3-9.5 10.9C5.5 19.8 1.5 16 1.5 10.5V4z" fill="#bdbdbd"/>
<path d="M11 3.3L18 5.7V11H11z M11 11H4.2c.5 3.8 3.2 6.6 6.8 7.9z" fill="#1a1a1a"/>
</svg>
<div class="a" style="left:366.25px;top:830.5px;width:200px;text-align:center;font-size:13px;line-height:13px;color:#c4c4c4;white-space:nowrap">Security</div>
<svg class="a" style="left:563px;top:803px" width="27" height="20" viewBox="0 0 27 20">
<circle cx="9" cy="5.2" r="4.3" fill="#bdbdbd"/><path d="M0.5 19c0-5 3.5-8 8.5-8s8.5 3 8.5 8z" fill="#bdbdbd"/>
<circle cx="19.5" cy="6" r="3.8" fill="#bdbdbd"/><path d="M18 11.5c5 -.5 8.5 2 8.5 7.5h-7.5c0-3-0.5-5.5-1-7.5z" fill="#bdbdbd"/>
</svg>
<div class="a" style="left:593px;top:804px;font-size:13px;line-height:13px;color:#c4c4c4">202</div>
<svg class="a" style="left:626px;top:808px" width="10" height="8" viewBox="0 0 10 8"><path d="M1.5 6L5 2.5 8.5 6" stroke="#c8c8c8" stroke-width="1.5" fill="none"/></svg>
<div class="a" style="left:476.4px;top:830.5px;width:200px;text-align:center;font-size:13px;line-height:13px;color:#c4c4c4;white-space:nowrap">Participants</div>
<svg class="a" style="left:679px;top:803px" width="25" height="21" viewBox="0 0 25 21">
<path d="M3.5 1h18a2.5 2.5 0 0 1 2.5 2.5v10a2.5 2.5 0 0 1-2.5 2.5H10l-5.5 4.5V16H3.5A2.5 2.5 0 0 1 1 13.5v-10A2.5 2.5 0 0 1 3.5 1z" fill="#bdbdbd"/>
</svg>
<div class="a" style="left:693.5px;top:795.5px;width:25px;height:17px;border-radius:6px;background:#ee3535;border:1px solid #1a1a1a"></div>
<div class="a" style="left:694px;top:799px;width:24px;text-align:center;font-size:11px;line-height:11px;font-weight:bold;color:#fff">12</div>
<svg class="a" style="left:721px;top:808px" width="10" height="8" viewBox="0 0 10 8"><path d="M1.5 6L5 2.5 8.5 6" stroke="#c8c8c8" stroke-width="1.5" fill="none"/></svg>
<div class="a" style="left:591.7px;top:830.5px;width:200px;text-align:center;font-size:13px;line-height:13px;color:#c4c4c4;white-space:nowrap">Chat</div>
<svg class="a" style="left:777px;top:802px" width="26" height="21" viewBox="0 0 26 21">
<rect x="0.5" y="0.5" width="25" height="20" rx="3" fill="#23d25a"/>
<path d="M13 16V6M8.5 10L13 5.5 17.5 10" stroke="#0d2a14" stroke-width="2" fill="none"/>
</svg>
<svg class="a" style="left:823px;top:808px" width="10" height="8" viewBox="0 0 10 8"><path d="M1.5 6L5 2.5 8.5 6" stroke="#c8c8c8" stroke-width="1.5" fill="none"/></svg>
<div class="a" style="left:689.7px;top:830.5px;width:200px;text-align:center;font-size:12px;line-height:13px;color:#2fd35e;white-space:nowrap">Share Screen</div>
<svg class="a" style="left:889px;top:800px" width="48" height="21" viewBox="0 0 48 21">
<rect x="0.5" y="0.5" width="20.5" height="20.5" rx="3" fill="#bdbdbd"/>
<rect x="6.5" y="6" width="3" height="9" fill="#1a1a1a"/><rect x="11.5" y="6" width="3" height="9" fill="#1a1a1a"/>
<rect x="25.5" y="0.5" width="20.5" height="20.5" rx="3" fill="#bdbdbd"/>
<rect x="31" y="5.5" width="9.5" height="9.5" rx="1" fill="#1a1a1a"/>
</svg>
<div class="a" style="left:812px;top:831.5px;width:200px;text-align:center;font-size:12.5px;line-height:13px;color:#c4c4c4;white-space:nowrap">Pause/Stop Recording</div>
<svg class="a" style="left:1027px;top:801px" width="22" height="22" viewBox="0 0 22 22">
<rect x="0.5" y="0.5" width="9.5" height="9.5" rx="2" fill="#bdbdbd"/><rect x="12" y="0.5" width="9.5" height="9.5" rx="2" fill="#bdbdbd"/>
<rect x="0.5" y="12" width="9.5" height="9.5" rx="2" fill="#bdbdbd"/><rect x="12" y="12" width="9.5" height="9.5" rx="2" fill="#bdbdbd"/>
</svg>
<div class="a" style="left:938.5px;top:830.5px;width:200px;text-align:center;font-size:12.5px;line-height:13px;color:#c4c4c4;white-space:nowrap">Breakout Rooms</div>
<svg class="a" style="left:1125px;top:799px" width="25" height="24" viewBox="0 0 25 24">
<circle cx="10.5" cy="13.5" r="10" fill="#bdbdbd"/>
<circle cx="7" cy="11.5" r="1.3" fill="#1a1a1a"/><circle cx="14" cy="11.5" r="1.3" fill="#1a1a1a"/>
<path d="M6 15.5c1.2 2.2 7.8 2.2 9 0" stroke="#1a1a1a" stroke-width="1.6" fill="none" stroke-linecap="round"/>
<circle cx="19" cy="5" r="5.5" fill="#1a1a1a"/>
<path d="M19 1.2v7.6M15.2 5h7.6" stroke="#bdbdbd" stroke-width="1.6"/>
</svg>
<div class="a" style="left:1035.9px;top:830.5px;width:200px;text-align:center;font-size:12.2px;line-height:13px;color:#c4c4c4;white-space:nowrap">Reactions</div>
<svg class="a" style="left:1209px;top:803px" width="21" height="20" viewBox="0 0 21 20">
<path d="M8 1.5H4A2.5 2.5 0 0 0 1.5 4v4M1.5 12v4A2.5 2.5 0 0 0 4 18.5h4M12 18.5h4a2.5 2.5 0 0 0 2.5-2.5v-4" stroke="#bdbdbd" stroke-width="1.7" fill="none" stroke-linecap="round"/>
<circle cx="15.5" cy="5" r="3" stroke="#bdbdbd" stroke-width="1.7" fill="none"/>
<circle cx="5" cy="15" r="2" stroke="#bdbdbd" stroke-width="1.5" fill="none"/>
</svg>
<svg class="a" style="left:1244px;top:808px" width="10" height="8" viewBox="0 0 10 8"><path d="M1.5 6L5 2.5 8.5 6" stroke="#c8c8c8" stroke-width="1.5" fill="none"/></svg>
<div class="a" style="left:1119.2px;top:830.5px;width:200px;text-align:center;font-size:13px;line-height:13px;color:#c4c4c4;white-space:nowrap">Apps</div>
<div class="a" style="left:1523px;top:807px;width:64px;height:29px;border-radius:5px;background:#cc2727"></div>
<div class="a" style="left:1523px;top:815.5px;width:64px;text-align:center;font-size:12px;line-height:12px;font-weight:bold;color:#fff">Leave</div>


<div class="a" style="left:0;top:850px;width:1600px;height:50px;background:#1e1e1e;overflow:hidden">
<div class="a" style="left:12px;top:6px;width:160px;height:40px;background:#3e1a13;filter:blur(7px)"></div>
<div class="a" style="left:270px;top:-10px;width:140px;height:60px;background:radial-gradient(ellipse at 50% 50%,rgba(60,55,20,0.45) 0%,rgba(30,30,30,0) 70%)"></div>
<div class="a" style="left:1150px;top:-10px;width:200px;height:40px;background:radial-gradient(ellipse at 50% 50%,rgba(60,40,20,0.35) 0%,rgba(30,30,30,0) 70%)"></div>
</div>
<div class="a" style="left:0;top:850px;width:1600px;height:1px;background:#2a2a2a"></div>
<!-- windows logo -->
<svg class="a" style="left:545px;top:863px" width="25" height="25" viewBox="0 0 25 25">
<defs><linearGradient id="wl" x1="0" y1="0" x2="1" y2="1"><stop offset="0" stop-color="#7fd8ff"/><stop offset="1" stop-color="#1a9cea"/></linearGradient></defs>
<rect x="0" y="0" width="11.8" height="11.8" rx="1" fill="url(#wl)"/><rect x="13" y="0" width="11.8" height="11.8" rx="1" fill="url(#wl)"/>
<rect x="0" y="13" width="11.8" height="11.8" rx="1" fill="url(#wl)"/><rect x="13" y="13" width="11.8" height="11.8" rx="1" fill="url(#wl)"/>
</svg>
<!-- search -->
<div class="a" style="left:584px;top:858px;width:105px;height:33px;border-radius:17px;background:#2c2c2c"></div>
<svg class="a" style="left:606px;top:866px" width="16" height="17" viewBox="0 0 16 17"><circle cx="6.5" cy="6.5" r="5.3" stroke="#e8e8e8" stroke-width="1.6" fill="none"/><path d="M10.3 10.6L15 15.5" stroke="#e8e8e8" stroke-width="1.7"/></svg>
<div class="a" style="left:626px;top:868px;font-size:13.3px;line-height:14px;color:#e6e6e6">Search</div>
<!-- explorer -->
<svg class="a" style="left:703px;top:863px" width="27" height="24" viewBox="0 0 27 24">
<path d="M1 2a1.5 1.5 0 0 1 1.5-1.5h6l2 2h14A1.5 1.5 0 0 1 26 4v18a1.5 1.5 0 0 1-1.5 1.5h-22A1.5 1.5 0 0 1 1 22z" fill="#f0c030"/>
<path d="M1 5h25v17a1.5 1.5 0 0 1-1.5 1.5h-22A1.5 1.5 0 0 1 1 22z" fill="#fbd458"/>
<path d="M6 17a2 2 0 0 1 2-2h11a2 2 0 0 1 2 2v6.5H6z" fill="#1976d2"/>
<rect x="8" y="17" width="11" height="2" fill="#4aa3f0"/>
</svg>
<div class="a" style="left:713px;top:892px;width:7px;height:3px;border-radius:2px;background:#9a9a9a"></div>
<!-- firefox -->
<svg class="a" style="left:750px;top:862px" width="24" height="25" viewBox="0 0 24 25">
<defs><radialGradient id="ff" cx="0.6" cy="0.3" r="0.8"><stop offset="0" stop-color="#ffe14a"/><stop offset="0.45" stop-color="#ff8a1a"/><stop offset="1" stop-color="#e8204a"/></radialGradient></defs>
<path d="M12 24.5C5.5 24.5 0.8 19.5 0.8 13.3c0-3 1-5.5 2.5-7.3.1 1.5.6 2.5 1.3 3.2C5.5 5.5 8 3.5 10 3.2 9.3 4.5 9.5 5.8 10.3 6.5c1-.5 2.5-.5 3.5 0C14 4 15.5 1.5 17.5 0.5c-.3 2 .5 3.5 1.5 4.5 2.5 2 4.2 5 4.2 8.3 0 6.2-5 11.2-11.2 11.2z" fill="url(#ff)"/>
<circle cx="12.2" cy="14" r="5.6" fill="#7b3fe0"/>
<path d="M7 12c1.5-2.5 4-3.5 6.5-3" stroke="#ff7a1a" stroke-width="2.2" fill="none"/>
</svg>
<!-- chrome -->
<svg class="a" style="left:795px;top:857px" width="34" height="31" viewBox="0 0 34 31">
<g transform="translate(0.5,5)">
<path d="M12.75 12.75 L1.7 6.4 A12.75 12.75 0 0 1 23.8 6.4z" fill="#e33b2e"/>
<path d="M12.75 12.75 L23.8 6.4 A12.75 12.75 0 0 1 12.75 25.5z" fill="#fbc116"/>
<path d="M12.75 12.75 L12.75 25.5 A12.75 12.75 0 0 1 1.7 6.4z" fill="#1e9e4a"/>
<circle cx="12.75" cy="12.75" r="5.6" fill="#fff"/><circle cx="12.75" cy="12.75" r="4.4" fill="#3b7ae8"/>
</g>
<defs><radialGradient id="pp" cx="0.5" cy="0.4" r="0.6"><stop offset="0" stop-color="#eae2e2"/><stop offset="0.6" stop-color="#a89090"/><stop offset="1" stop-color="#6a5858"/></radialGradient></defs>
<circle cx="23.3" cy="8" r="8" fill="url(#pp)"/>
</svg>
<div class="a" style="left:805px;top:892px;width:7px;height:3px;border-radius:2px;background:#9a9a9a"></div>
<!-- edge -->
<svg class="a" style="left:841px;top:861px" width="27" height="27" viewBox="0 0 27 27">
<defs><linearGradient id="eg1" x1="0" y1="0" x2="1" y2="0.6"><stop offset="0" stop-color="#2aa0e0"/><stop offset="0.6" stop-color="#36c4c0"/><stop offset="1" stop-color="#5fd45a"/></linearGradient>
<linearGradient id="eg2" x1="0" y1="0" x2="0" y2="1"><stop offset="0" stop-color="#1f7ad0"/><stop offset="1" stop-color="#0f4e9a"/></linearGradient></defs>
<path d="M13.5 0.5C21 0.5 26.5 6 26.5 12.5c0 3.5-2.5 6-6 6-2.5 0-4-1-4.3-2.3 2-1 2.5-3 1.8-4.8-1-2.5-4-3.5-6.8-3C6.5 9 2.5 13 2 18 0.5 15.5 0.5 13 0.5 12 1.5 5.5 7 0.5 13.5 0.5z" fill="url(#eg1)"/>
<path d="M2 18c.5-5 4.5-9 9-9.5 2.8-.5 5.8.5 6.8 3 .7 1.8.2 3.8-1.8 4.8-2.5-1-5.5 1-4.5 4.2 1 3 4.5 5 8.5 5-2 1.3-4.3 2-6.5 2C8 27 3 23.5 2 18z" fill="url(#eg2)"/>
</svg>
<!-- red app -->
<svg class="a" style="left:887px;top:862px" width="26" height="26" viewBox="0 0 26 26">
<circle cx="13" cy="13" r="12" fill="#111" stroke="#d42a2a" stroke-width="1.3"/>
<path d="M13 5l1.6 2.3 2.6-.8.5 2.7 2.7.6-.9 2.6 2.2 1.7-2.3 1.6.7 2.6-2.7.4-.7 2.7-2.5-1-1.9 2-1.7-2.2-2.6.8-.5-2.7-2.7-.6.9-2.6L5 13l2.3-1.6-.7-2.6 2.7-.4.7-2.7 2.5 1z" fill="#e02a2a"/>
<circle cx="12.5" cy="13" r="2.8" fill="#111"/>
</svg>
<!-- powerpoint -->
<svg class="a" style="left:933px;top:862px" width="26" height="25" viewBox="0 0 26 25">
<circle cx="14" cy="12.5" r="12" fill="#ed6c47"/>
<path d="M14 0.5A12 12 0 0 1 26 12.5H14z" fill="#ff8f6b"/>
<path d="M14 12.5H26A12 12 0 0 1 14 24.5z" fill="#d35230"/>
<rect x="0.5" y="6" width="13" height="13" rx="1.5" fill="#c43e1c"/>
<path d="M4.5 16.5V8.5h3a2.5 2.5 0 0 1 0 5h-3" stroke="#fff" stroke-width="1.8" fill="none"/>
</svg>
<div class="a" style="left:943px;top:892px;width:7px;height:3px;border-radius:2px;background:#9a9a9a"></div>
<!-- grid app -->
<svg class="a" style="left:979px;top:862px" width="26" height="26" viewBox="0 0 26 26">
<rect x="0.5" y="0.5" width="7.6" height="7.6" fill="#2c7fc4"/><rect x="9.2" y="0.5" width="7.6" height="7.6" fill="#2c7fc4"/><rect x="17.9" y="0.5" width="7.6" height="7.6" fill="#3cba50"/>
<rect x="0.5" y="9.2" width="7.6" height="7.6" fill="#2c7fc4"/><rect x="9.2" y="9.2" width="7.6" height="7.6" fill="#2c7fc4"/><rect x="17.9" y="9.2" width="7.6" height="7.6" fill="#2c7fc4"/>
<rect x="0.5" y="17.9" width="7.6" height="7.6" fill="#f5a623"/><rect x="9.2" y="17.9" width="7.6" height="7.6" fill="#2c7fc4"/><rect x="17.9" y="17.9" width="7.6" height="7.6" fill="#2c7fc4"/>
</svg>
<div class="a" style="left:989px;top:892px;width:7px;height:3px;border-radius:2px;background:#9a9a9a"></div>
<!-- zoom -->
<div class="a" style="left:1017px;top:854px;width:41px;height:41px;border-radius:5px;background:#2b2b2b"></div>
<svg class="a" style="left:1025px;top:861px" width="27" height="27" viewBox="0 0 27 27">
<defs><linearGradient id="zg" x1="0" y1="0" x2="0" y2="1"><stop offset="0" stop-color="#3a8bff"/><stop offset="1" stop-color="#0b4fe0"/></linearGradient></defs>
<path d="M13.5 0.5C22 0.5 26.5 5 26.5 13.5S22 26.5 13.5 26.5 0.5 22 0.5 13.5 5 0.5 13.5 0.5z" fill="url(#zg)"/>
<text x="13.5" y="15.5" font-family="Liberation Sans" font-weight="bold" font-size="6.5" fill="#fff" text-anchor="middle">zoom</text>
</svg>
<div class="a" style="left:1030px;top:892px;width:17px;height:3px;border-radius:2px;background:#4cc2ff"></div>
<!-- tray -->
<svg class="a" style="left:1296px;top:869px" width="16" height="10" viewBox="0 0 16 10"><path d="M1.5 8.5L8 2l6.5 6.5" stroke="#e6e6e6" stroke-width="1.3" fill="none"/></svg>
<svg class="a" style="left:1330px;top:865px" width="15" height="19" viewBox="0 0 15 19"><rect x="4.5" y="1" width="6" height="11" rx="3" stroke="#5cc8ff" stroke-width="1.4" fill="none"/><path d="M1.5 9c0 3.5 2.7 5.5 6 5.5s6-2 6-5.5M7.5 14.5V18" stroke="#5cc8ff" stroke-width="1.4" fill="none"/></svg>
<div class="a" style="left:1366px;top:870.5px;font-size:12.5px;line-height:13px;color:#e6e6e6">IND</div>
<svg class="a" style="left:1408px;top:867px" width="18" height="14" viewBox="0 0 18 14"><path d="M1 5.5a11.5 11.5 0 0 1 16 0M3.5 8a8 8 0 0 1 11 0M6 10.5a4.5 4.5 0 0 1 6 0" stroke="#e6e6e6" stroke-width="1.3" fill="none"/><circle cx="9" cy="12.5" r="1.2" fill="#e6e6e6"/></svg>
<svg class="a" style="left:1433px;top:867px" width="18" height="15" viewBox="0 0 18 15"><path d="M1 5h3l4.5-4v13L4 10H1z" stroke="#e6e6e6" stroke-width="1.2" fill="none" stroke-linejoin="round"/><path d="M11 5l5 5M16 5l-5 5" stroke="#e6e6e6" stroke-width="1.2"/></svg>
<svg class="a" style="left:1458px;top:866px" width="19" height="16" viewBox="0 0 19 16"><rect x="1" y="4" width="14.5" height="9" rx="1.5" stroke="#e6e6e6" stroke-width="1.2" fill="none"/><rect x="16" y="6.5" width="1.8" height="4" fill="#e6e6e6"/><rect x="2.5" y="5.5" width="6" height="6" fill="#e6e6e6"/><path d="M5 1L2.5 6h3l-1.5 4" stroke="#e6e6e6" stroke-width="1.1" fill="none"/></svg>
<div class="a" style="left:1455px;top:861px;width:100px;text-align:right;font-size:12.5px;line-height:13px;color:#e6e6e6">12.41</div>
<div class="a" style="left:1455px;top:877.5px;width:100px;text-align:right;font-size:12.5px;line-height:13px;color:#e6e6e6">18/03/2023</div>
<div class="a" style="left:1562px;top:867px;width:17px;height:17px;border-radius:50%;background:#4cc2ff"></div>
<div class="a" style="left:1562px;top:870px;width:17px;text-align:center;font-size:11px;line-height:11px;color:#111">4</div>


<!-- NOTIFICATION POPUP -->
<div class="a" style="left:565px;top:43px;width:465px;height:47px;border-radius:11px;background:rgba(3,3,5,0.95)"></div>
<div class="a" style="left:582px;top:59px;font-size:14px;color:#e8e8e8;white-space:nowrap">Sudarwan entered the waiting room</div>
<div class="a" style="left:810px;top:52px;width:83px;height:29px;border-radius:6px;background:#0e71eb"></div>
<div class="a" style="left:810px;top:59px;width:83px;text-align:center;font-size:14px;font-weight:bold;color:#fff">Admit</div>
<div class="a" style="left:902px;top:52px;width:83px;height:29px;border-radius:6px;background:#1e1e1e"></div>
<div class="a" style="left:902px;top:59px;width:83px;text-align:center;font-size:14px;color:#e8e8e8">View</div>
<svg class="a" style="left:1001px;top:62px" width="10" height="9" viewBox="0 0 10 9"><path d="M1 0.5l8 8M9 0.5l-8 8" stroke="#eee" stroke-width="1.5"/></svg>

</body></html>
